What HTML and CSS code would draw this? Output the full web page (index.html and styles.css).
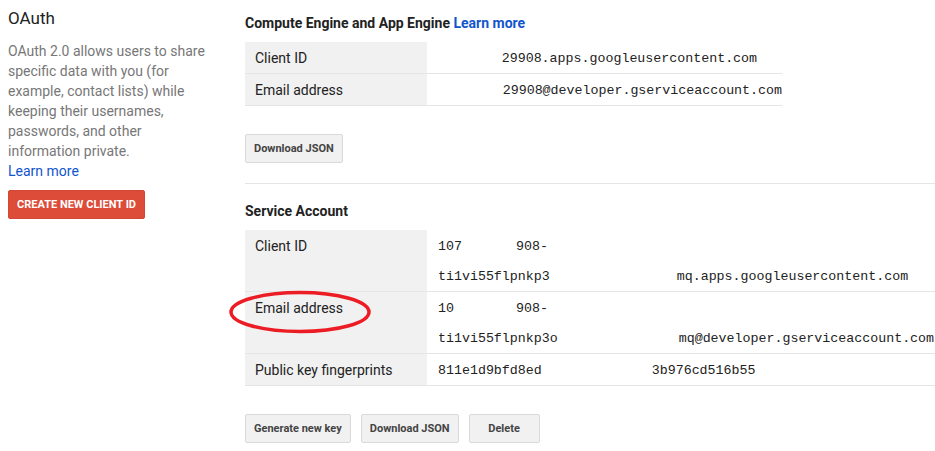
FILE: index.html
```html
<!DOCTYPE html>
<html>
<head>
<meta charset="utf-8">
<link rel="stylesheet" href="styles.css">
</head>
<body>
<div class="page">
  <aside class="sidebar">
    <h1 class="side-title">OAuth</h1>
    <p class="side-desc">OAuth 2.0 allows users to share specific data with you (for example, contact lists) while keeping their usernames, passwords, and other information private.<br><a class="link" href="#">Learn more</a></p>
    <button class="btn-red">CREATE NEW CLIENT ID</button>
  </aside>
  <main class="content">
    <h2 class="sec-title">Compute Engine and App Engine <a class="link" href="#">Learn more</a></h2>
    <table class="kv kv-narrow">
      <tr><td class="k">Client ID</td><td class="v"><span class="gap g64"></span>29908.apps.googleusercontent.com</td></tr>
      <tr><td class="k">Email address</td><td class="v"><span class="gap g65"></span>29908@developer.gserviceaccount.com</td></tr>
    </table>
    <div class="actions"><button class="btn">Download JSON</button></div>
    <hr class="divider">
    <h2 class="sec-title">Service Account</h2>
    <table class="kv">
      <tr class="tall"><td class="k">Client ID</td><td class="v"><div class="vl">107<span class="gap g54"></span>908-</div><div class="vl">ti1vi55flpnkp3<span class="gap g127"></span>mq.apps.googleusercontent.com</div></td></tr>
      <tr class="tall"><td class="k">Email address</td><td class="v"><div class="vl">10<span class="gap g62"></span>908-</div><div class="vl">ti1vi55flpnkp3o<span class="gap g121"></span>mq@developer.gserviceaccount.com</div></td></tr>
      <tr><td class="k">Public key fingerprints</td><td class="v">811e1d9bfd8ed<span class="gap g110"></span>3b976cd516b55</td></tr>
    </table>
    <div class="actions"><button class="btn">Generate new key</button><button class="btn">Download JSON</button><button class="btn">Delete</button></div>
  </main>
  <svg class="circle" width="146" height="46" viewBox="0 0 146 46"><ellipse cx="72" cy="22" rx="69" ry="19.5" fill="none" stroke="#ec1c24" stroke-width="3.5"/></svg>
</div>
</body>
</html>
```
FILE: styles.css
```css
html, body { margin: 0; padding: 0; background: #fff; }
body { font-family: Roboto, "Liberation Sans", Arial, sans-serif; color: #222; font-size: 14px; }
.page { position: relative; display: flex; align-items: flex-start; width: 935px; }
.sidebar { width: 207px; padding: 8px 0 0 8px; margin-right: 30px; flex: none; }
.side-title { font-size: 17px; font-weight: 400; line-height: 20px; margin: 0 0 13px; color: #222; }
.side-desc { margin: 0 0 9px; color: #777; font-size: 14px; line-height: 20px; }
.link { color: #15c; text-decoration: none; }
.btn-red { display: inline-block; height: 29px; padding: 0 8px; background: #dd4b39; border: 1px solid #d14836; border-radius: 2px; color: #fff; font-family: Roboto, "Liberation Sans", sans-serif; font-size: 11px; font-weight: 700; white-space: nowrap; }
.content { flex: 1; padding-top: 13px; min-width: 0; }
.sec-title { font-size: 14px; font-weight: 700; line-height: 20px; margin: 0 0 9px; color: #222; }
.sec-title .link { font-weight: 700; }
.kv { border-collapse: collapse; width: 100%; }
.kv-narrow { width: 537px; }
.kv td { padding: 2px 0 0; border-bottom: 1px solid #e5e5e5; vertical-align: top; line-height: 29px; height: 29px; box-sizing: content-box; }
.kv .k { width: 172px; padding-left: 10px; background: #f1f1f1; color: #222; font-size: 14px; }
.kv .v { padding-left: 11px; font-family: "Liberation Mono", "Courier New", monospace; font-size: 13.3px; color: #222; white-space: nowrap; }
.kv .tall td { height: 59px; }
.vl { line-height: 29.5px; height: 29.5px; }
.gap { display: inline-block; }
.g54 { width: 54px; } .g62 { width: 62px; } .g64 { width: 64px; } .g65 { width: 65px; }
.g110 { width: 110px; } .g121 { width: 121px; } .g127 { width: 127px; }
.actions { display: flex; gap: 10px; margin-top: 28px; }
.btn { height: 29px; min-width: 71px; padding: 0 8px; background: #f1f1f1; border: 1px solid #d9d9d9; border-radius: 2px; color: #444; font-family: Roboto, "Liberation Sans", sans-serif; font-size: 11px; font-weight: 700; white-space: nowrap; }
.divider { border: 0; border-top: 1px solid #e5e5e5; margin: 20px 0 17px; }
.circle { position: absolute; left: 228px; top: 290px; }
```
